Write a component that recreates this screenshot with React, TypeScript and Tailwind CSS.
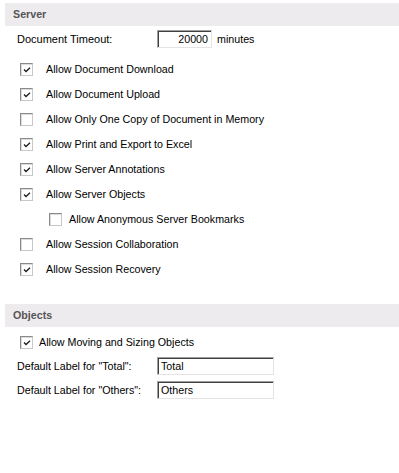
import React from "react";

const font = { fontFamily: '"Liberation Sans", Arial, sans-serif' };

function Check({ checked }: { checked: boolean }) {
  return (
    <div className="relative w-[13px] h-[13px] shrink-0 border border-t-[#8a8a8a] border-l-[#8a8a8a] border-b-[#c8c8c8] border-r-[#c8c8c8] bg-white shadow-[inset_1px_1px_0_#dcdcdc]">
      {checked && (
        <svg className="absolute left-[2px] top-[3px]" width="8" height="6" viewBox="0 0 8 6">
          <path d="M1 2.5 L3 4.5 L7 0.8" fill="none" stroke="#1a1a1a" strokeWidth="1.3" />
        </svg>
      )}
    </div>
  );
}

function CheckRow({ label, checked, indent }: { label: string; checked: boolean; indent?: boolean }) {
  return (
    <div className={`flex items-center h-[25px] ${indent ? "pl-[49px] gap-[7px]" : "pl-[20px] gap-[13px]"}`}>
      <Check checked={checked} />
      <span>{label}</span>
    </div>
  );
}

function Field({ value, w, right }: { value: string; w: string; right?: boolean }) {
  return (
    <div
      className={`${w} h-[18px] flex items-center bg-white border border-t-[#a0a0a0] border-l-[#a0a0a0] border-b-[#e4e4e4] border-r-[#e4e4e4] shadow-[inset_1px_1px_0_#404040] ${
        right ? "justify-end pr-[3px]" : "pl-[3px]"
      }`}
    >
      <span>{value}</span>
    </div>
  );
}

function Header({ title }: { title: string }) {
  return (
    <div className="ml-[5px] h-[23px] bg-[#eeebee] flex items-center pl-[8px] font-bold text-[#555555]">
      {title}
    </div>
  );
}

export default function App() {
  return (
    <div className="w-[399px] h-[473px] bg-white text-[10.7px] text-black" style={font}>
      <div className="pt-[3px]">
        <Header title="Server" />
        <div className="mt-[4px] flex items-center h-[18px] pl-[17px]">
          <span className="w-[140px] text-[11px]">Document Timeout:</span>
          <Field value="20000" w="w-[55px]" right />
          <span className="ml-[5px]">minutes</span>
        </div>
        <div className="mt-[9px]">
          <CheckRow label="Allow Document Download" checked />
          <CheckRow label="Allow Document Upload" checked />
          <CheckRow label="Allow Only One Copy of Document in Memory" checked={false} />
          <CheckRow label="Allow Print and Export to Excel" checked />
          <CheckRow label="Allow Server Annotations" checked />
          <CheckRow label="Allow Server Objects" checked />
          <CheckRow label="Allow Anonymous Server Bookmarks" checked={false} indent />
          <CheckRow label="Allow Session Collaboration" checked={false} />
          <CheckRow label="Allow Session Recovery" checked />
        </div>
        <div className="mt-[22px]">
          <Header title="Objects" />
        </div>
        <div className="mt-[3px] flex items-center h-[24px] pl-[20px] gap-[6px]">
          <Check checked />
          <span>Allow Moving and Sizing Objects</span>
        </div>
        <div className="flex items-center h-[24px] pl-[17px]">
          <span className="w-[140px]">Default Label for "Total":</span>
          <Field value="Total" w="w-[117px]" />
        </div>
        <div className="flex items-center h-[24px] pl-[17px]">
          <span className="w-[140px]">Default Label for "Others":</span>
          <Field value="Others" w="w-[117px]" />
        </div>
      </div>
    </div>
  );
}
